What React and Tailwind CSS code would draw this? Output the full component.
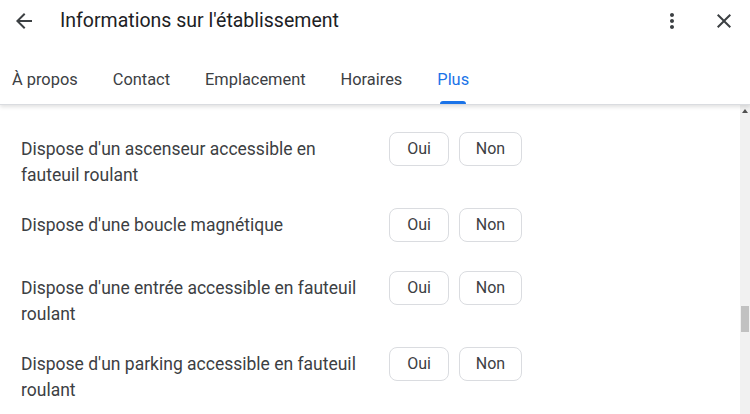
import React from 'react';

const tabs = ['À propos', 'Contact', 'Emplacement', 'Horaires', 'Plus'];

const rows = [
  "Dispose d'un ascenseur accessible en fauteuil roulant",
  "Dispose d'une boucle magnétique",
  "Dispose d'une entrée accessible en fauteuil roulant",
  "Dispose d'un parking accessible en fauteuil roulant",
];

// Material-style icons
const BackIcon = () => (
  <svg width="24" height="24" viewBox="0 0 24 24" fill="#3c4043">
    <path d="M20 11H7.83l5.59-5.59L12 4l-8 8 8 8 1.41-1.41L7.83 13H20v-2z" />
  </svg>
);

const MoreIcon = () => (
  <svg width="24" height="24" viewBox="0 0 24 24" fill="#3c4043">
    <path d="M12 8c1.1 0 2-.9 2-2s-.9-2-2-2-2 .9-2 2 .9 2 2 2zm0 2c-1.1 0-2 .9-2 2s.9 2 2 2 2-.9 2-2-.9-2-2-2zm0 6c-1.1 0-2 .9-2 2s.9 2 2 2 2-.9 2-2-.9-2-2-2z" />
  </svg>
);

const CloseIcon = () => (
  <svg width="24" height="24" viewBox="0 0 24 24" fill="#3c4043">
    <path d="M19 6.41L17.59 5 12 10.59 6.41 5 5 6.41 10.59 12 5 17.59 6.41 19 12 13.41 17.59 19 19 17.59 13.41 12z" />
  </svg>
);

function Header() {
  return (
    <div className="relative z-10 bg-white border-b border-[#dadce0] shadow-[0_2px_4px_rgba(0,0,0,0.12)]">
      <div className="flex items-center h-[42px] pl-[12px] pr-[14px]">
        <BackIcon />
        <div className="ml-[24px] flex-1 text-[19.5px] text-[#202124]">Informations sur l'établissement</div>
        <MoreIcon />
        <div className="ml-[28px]"><CloseIcon /></div>
      </div>
      <div className="flex pl-[12px] gap-[35px] h-[62px] pt-[28px]">
        {tabs.map((t) => {
          const active = t === 'Plus';
          return (
            <div key={t} className="flex flex-col items-center">
              <div className={active ? 'h-[20px] leading-[20px] text-[16.4px] text-[#1a73e8]' : 'h-[20px] leading-[20px] text-[16.4px] text-[#3c4043]'}>
                {t}
              </div>
              {active && <div className="mt-[11px] h-[3px] w-[26px] rounded-t-[3px] bg-[#1a73e8]" />}
            </div>
          );
        })}
      </div>
    </div>
  );
}

function Row({ label }) {
  return (
    <div className="flex items-start min-h-[43px]">
      <div className="w-[352px] pt-[4px] text-[17.5px] leading-[26px] text-[#3c4043]">{label}</div>
      <div className="ml-[16px] flex gap-[10px]">
        <button className="w-[60px] h-[34px] rounded-[8px] border border-[#dadce0] bg-white text-[16px] text-[#3c4043]">Oui</button>
        <button className="w-[63px] h-[34px] rounded-[8px] border border-[#dadce0] bg-white text-[16px] text-[#3c4043]">Non</button>
      </div>
    </div>
  );
}

export default function App() {
  return (
    <div className="w-[750px] h-[414px] overflow-hidden flex flex-col bg-white font-['Roboto',sans-serif]">
      <Header />
      <div className="flex flex-1 min-h-0">
        <div className="flex-1 pt-[27px] pl-[21px] flex flex-col gap-[20px]">
          {rows.map((r) => (
            <Row key={r} label={r} />
          ))}
        </div>
        {/* scrollbar */}
        <div className="w-[10px] bg-[#f1f1f1] flex flex-col items-center">
          <div className="mt-[4px] w-0 h-0 border-l-[3px] border-r-[3px] border-b-[4px] border-l-transparent border-r-transparent border-b-[#505050]" />
          <div className="mt-[193px] w-[8px] h-[26px] bg-[#c1c1c1]" />
        </div>
      </div>
    </div>
  );
}
